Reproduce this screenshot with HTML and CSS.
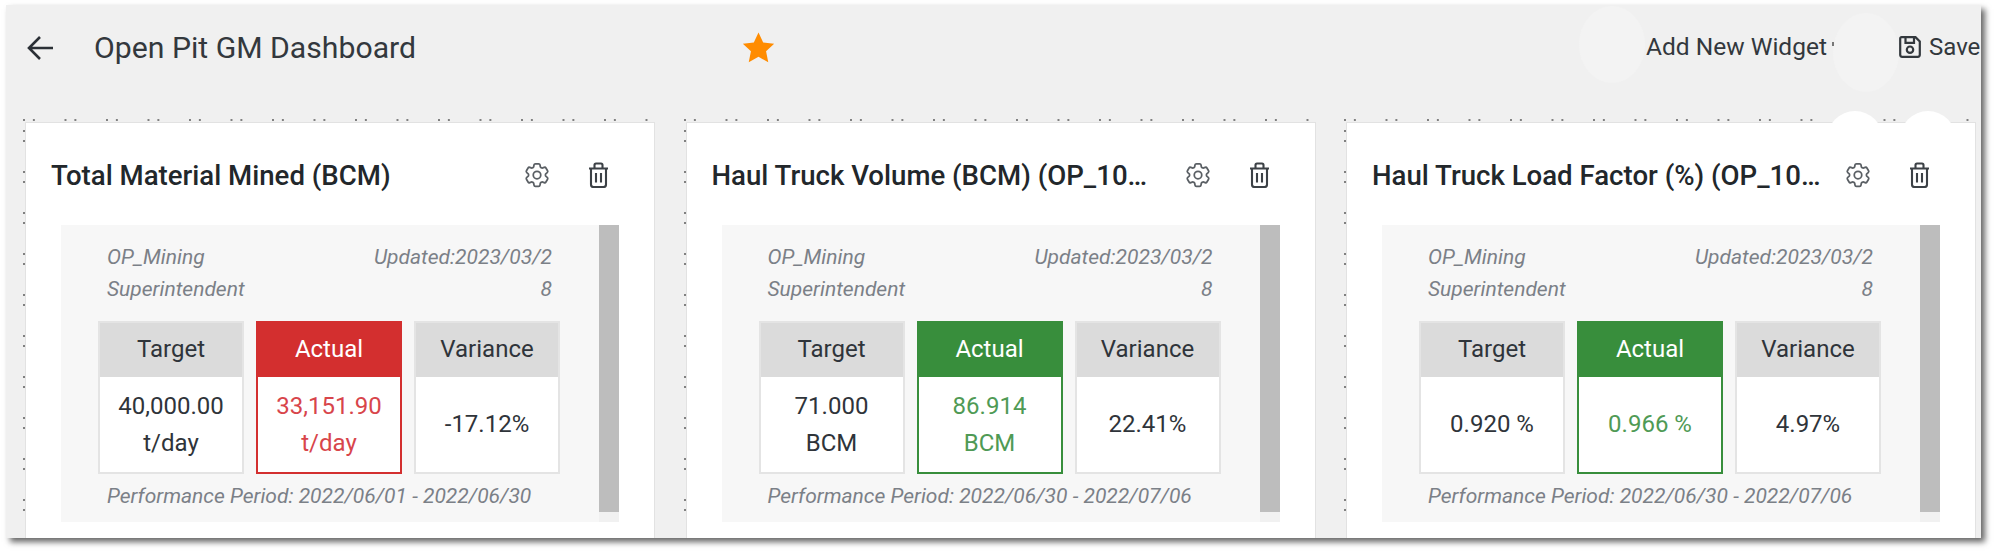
FILE: index.html
```html
<!DOCTYPE html>
<html lang="en">
<head>
    <meta charset="UTF-8">
    <title>Open Pit GM Dashboard</title>
    <link rel="stylesheet" href="styles.css">
</head>
<body>
    <svg class="sprites" width="0" height="0">
        <symbol id="gear" viewBox="0 0 24 24">
            <path d="M9.594 3.94c.09-.542.56-.94 1.11-.94h2.593c.55 0 1.02.398 1.11.94l.213 1.281c.063.374.313.686.645.87.074.04.147.083.22.127.324.196.72.257 1.075.124l1.217-.456a1.125 1.125 0 011.37.49l1.296 2.247a1.125 1.125 0 01-.26 1.431l-1.003.827c-.293.24-.438.613-.431.992a6.759 6.759 0 010 .255c-.007.378.138.75.43.99l1.005.828c.424.35.534.954.26 1.43l-1.298 2.247a1.125 1.125 0 01-1.369.491l-1.217-.456c-.355-.133-.75-.072-1.076.124a6.57 6.57 0 01-.22.128c-.331.183-.581.495-.644.869l-.213 1.28c-.09.543-.56.941-1.11.941h-2.594c-.55 0-1.02-.398-1.11-.94l-.213-1.281c-.062-.374-.312-.686-.644-.87a6.52 6.52 0 01-.22-.127c-.325-.196-.72-.257-1.076-.124l-1.217.456a1.125 1.125 0 01-1.369-.49l-1.297-2.247a1.125 1.125 0 01.26-1.431l1.004-.827c.292-.24.437-.613.43-.992a6.932 6.932 0 010-.255c.007-.378-.138-.75-.43-.99l-1.004-.828a1.125 1.125 0 01-.26-1.43l1.297-2.247a1.125 1.125 0 011.37-.491l1.216.456c.356.133.751.072 1.076-.124.072-.044.146-.087.22-.128.332-.183.582-.495.644-.869l.214-1.281z"/>
            <circle cx="12" cy="12" r="3"/>
        </symbol>
        <symbol id="trash" viewBox="0 0 21 26">
            <path d="M1 6.5h19M6.5 6V3a1.5 1.5 0 011.5-1.500h5A1.500 1.500 0 0114.500 3v3M3 6.500v16a2.500 2.500 0 002.500 2.500h10a2.500 2.500 0 002.500-2.500v-16M8 11v9.500M13 11v9.500"/>
        </symbol>
    </svg>

    <div class="frame">
        <div class="toolbar">
            <span class="halo halo-add"></span>
            <span class="halo halo-save"></span>
            <svg class="back" viewBox="0 0 28 26">
                <path d="M27 13H3M14 2L3 13l11 11"/>
            </svg>
            <h1>Open Pit GM Dashboard</h1>
            <svg class="star" viewBox="0 0 24 24">
                <path d="M12 1l3.4 7.400 8 .9-5.900 5.500 1.600 8L12 18.800l-7.100 4 1.600-8L.6 9.300l8-.9z"/>
            </svg>
            <span class="add-widget">Add New Widget</span>
            <span class="add-caret"></span>
            <svg class="save-icon" viewBox="0 0 22 22">
                <path d="M2.500 1.200h14l4.300 4.300v13.300a2 2 0 01-2 2H3.200a2 2 0 01-2-2V2.500a1.300 1.300 0 011.300-1.300zM6.500 1.200v5.600h8.500V1.200M11 10.500a3.200 3.200 0 100 6.400 3.200 3.200 0 000-6.400z"/>
            </svg>
            <span class="save">Save</span>
        </div>

        <div class="board">
            <div class="widget">
                <div class="card">
                    <div class="card-head">
                        <h2>Total Material Mined (BCM)</h2>
                        <svg class="gear"><use href="#gear"/></svg>
                        <svg class="trash"><use href="#trash"/></svg>
                    </div>
                    <div class="panel">
                        <div class="panel-body">
                            <div class="meta">
                                <span class="owner">OP_Mining Superintendent</span>
                                <span class="updated">Updated:2023/03/28</span>
                            </div>
                            <div class="kpis">
                                <div class="kpi">
                                    <div class="kpi-head">Target</div>
                                    <div class="kpi-value">40,000.00<br>t/day</div>
                                </div>
                                <div class="kpi bad">
                                    <div class="kpi-head">Actual</div>
                                    <div class="kpi-value">33,151.90<br>t/day</div>
                                </div>
                                <div class="kpi">
                                    <div class="kpi-head">Variance</div>
                                    <div class="kpi-value">-17.12%</div>
                                </div>
                            </div>
                            <div class="period">Performance Period: 2022/06/01 - 2022/06/30</div>
                        </div>
                        <div class="scrollbar"><div class="thumb"></div></div>
                    </div>
                </div>
            </div>

            <div class="widget">
                <div class="card">
                    <div class="card-head">
                        <h2>Haul Truck Volume (BCM) (OP_1001)</h2>
                        <svg class="gear"><use href="#gear"/></svg>
                        <svg class="trash"><use href="#trash"/></svg>
                    </div>
                    <div class="panel">
                        <div class="panel-body">
                            <div class="meta">
                                <span class="owner">OP_Mining Superintendent</span>
                                <span class="updated">Updated:2023/03/28</span>
                            </div>
                            <div class="kpis">
                                <div class="kpi">
                                    <div class="kpi-head">Target</div>
                                    <div class="kpi-value">71.000<br>BCM</div>
                                </div>
                                <div class="kpi good">
                                    <div class="kpi-head">Actual</div>
                                    <div class="kpi-value">86.914<br>BCM</div>
                                </div>
                                <div class="kpi">
                                    <div class="kpi-head">Variance</div>
                                    <div class="kpi-value">22.41%</div>
                                </div>
                            </div>
                            <div class="period">Performance Period: 2022/06/30 - 2022/07/06</div>
                        </div>
                        <div class="scrollbar"><div class="thumb"></div></div>
                    </div>
                </div>
            </div>

            <div class="widget">
                <div class="card">
                    <span class="bump bump-gear"></span>
                    <span class="bump bump-trash"></span>
                    <div class="card-head">
                        <h2>Haul Truck Load Factor (%) (OP_1001)</h2>
                        <svg class="gear"><use href="#gear"/></svg>
                        <svg class="trash"><use href="#trash"/></svg>
                    </div>
                    <div class="panel">
                        <div class="panel-body">
                            <div class="meta">
                                <span class="owner">OP_Mining Superintendent</span>
                                <span class="updated">Updated:2023/03/28</span>
                            </div>
                            <div class="kpis">
                                <div class="kpi">
                                    <div class="kpi-head">Target</div>
                                    <div class="kpi-value">0.920 %</div>
                                </div>
                                <div class="kpi good">
                                    <div class="kpi-head">Actual</div>
                                    <div class="kpi-value">0.966 %</div>
                                </div>
                                <div class="kpi">
                                    <div class="kpi-head">Variance</div>
                                    <div class="kpi-value">4.97%</div>
                                </div>
                            </div>
                            <div class="period">Performance Period: 2022/06/30 - 2022/07/06</div>
                        </div>
                        <div class="scrollbar"><div class="thumb"></div></div>
                    </div>
                </div>
            </div>
        </div>
    </div>
</body>
</html>
```

FILE: styles.css
```css
* {
    margin: 0;
    padding: 0;
    box-sizing: border-box;
    font-family: Roboto, "Liberation Sans", sans-serif;
}

html, body {
    height: 557px;
    overflow: hidden;
    background-color: #fff;
}

.sprites {
    position: absolute;
}

.frame {
    width: 1975px;
    height: 533px;
    margin: 5px 0 0 6px;
    padding-left: 17px;
    background-color: #f0f0f0;
    box-shadow: 4px 4px 6px rgba(0, 0, 0, 0.6);
    overflow: hidden;
}

/* header */
.toolbar {
    position: relative;
    display: flex;
    align-items: center;
    height: 85px;
    padding: 0 0 0 3px;
    color: #33383d;
}

.halo {
    position: absolute;
    border-radius: 50%;
    background-color: #f3f3f3;
}

.halo-add {
    left: 1556px;
    top: 1px;
    width: 66px;
    height: 77px;
}

.halo-save {
    left: 1810px;
    top: 8px;
    width: 66px;
    height: 79px;
}

.back {
    width: 28px;
    height: 26px;
    fill: none;
    stroke: #2b3036;
    stroke-width: 2.6;
}

h1 {
    width: 321px;
    margin-left: 40px;
    font-size: 30.2px;
    font-weight: 400;
    white-space: nowrap;
}

.star {
    width: 33px;
    height: 33px;
    margin-left: 327px;
    fill: #ff8c00;
}

.add-widget {
    position: relative;
    width: 180px;
    margin: 0 0 2px 871px;
    font-size: 24.5px;
    white-space: nowrap;
}

.add-caret {
    position: relative;
    width: 2px;
    height: 4px;
    margin: 0 0 8px 6px;
    background-color: #777;
}

.save-icon {
    position: relative;
    flex: none;
    width: 22px;
    height: 22px;
    margin: 0 0 2px 65px;
    fill: none;
    stroke: #33383d;
    stroke-width: 2.2;
}

.save {
    margin: 0 0 2px 8px;
    font-size: 24px;
}

/* widgets */
.board {
    display: grid;
    grid-template-columns: repeat(3, 632px);
    column-gap: 28.5px;
    margin-top: 29px;
}

.widget {
    height: 420px;
    padding: 3px 0 0 2px;
    background-image:
        linear-gradient(90deg, #808080 2px, transparent 2px, transparent 10px, #808080 10px, #808080 12px, transparent 12px),
        linear-gradient(180deg, #808080 2px, transparent 2px, transparent 10px, #808080 10px, #808080 12px, transparent 12px);
    background-size: 41.5px 2px, 2px 41px;
    background-position: 0 0, 0 11px;
    background-repeat: repeat-x, repeat-y;
}

.card {
    position: relative;
    height: 100%;
    background-color: #fff;
    border: 1px solid #e2e2e2;
    border-bottom: none;
}

.bump {
    position: absolute;
    top: -12px;
    width: 56px;
    height: 56px;
    border-radius: 50%;
    background-color: #fff;
}

.bump-gear {
    left: 480px;
}

.bump-trash {
    left: 553px;
}

.card-head {
    position: relative;
    display: flex;
    align-items: center;
    height: 102px;
    padding: 2px 0 0 25px;
    color: #22272b;
}

h2 {
    width: 450px;
    font-size: 27.6px;
    font-weight: 500;
    white-space: nowrap;
    overflow: hidden;
    text-overflow: ellipsis;
}

.gear {
    flex: none;
    width: 30px;
    height: 30px;
    margin-left: 21px;
    fill: none;
    stroke: #5a5f64;
    stroke-width: 1.4;
}

.trash {
    flex: none;
    width: 21px;
    height: 26px;
    margin-left: 36px;
    fill: none;
    stroke: #3c4146;
    stroke-width: 2.1;
}

.panel {
    display: flex;
    width: 558px;
    height: 297px;
    margin-left: 35px;
    background-color: #f7f7f7;
}

.panel-body {
    flex: 1;
    padding: 16px 47px 0 46px;
    min-width: 0;
}

.scrollbar {
    width: 20px;
    background-color: #f1f1f1;
}

.thumb {
    height: 287px;
    background-color: #bdbdbd;
}

.meta {
    display: flex;
    justify-content: space-between;
    height: 64px;
    font-size: 21px;
    font-style: italic;
    line-height: 32px;
    color: #7b8087;
}

.owner {
    width: 170px;
}

.updated {
    width: 185px;
    text-align: right;
    word-break: break-all;
}

.kpis {
    display: grid;
    grid-template-columns: repeat(3, 146px);
    column-gap: 12px;
    margin: 16px 0 0 -9px;
}

.kpi {
    display: flex;
    flex-direction: column;
    height: 153px;
    border: 2px solid #e4e4e4;
    background-color: #fff;
    color: #2f343a;
}

.kpi-head {
    height: 54px;
    font-size: 24px;
    line-height: 52px;
    text-align: center;
    background-color: #dbdbdb;
}

.kpi-value {
    flex: 1;
    display: flex;
    flex-direction: column;
    justify-content: center;
    font-size: 24px;
    line-height: 37px;
    text-align: center;
}

.bad {
    border-color: #d32f2f;
    color: #d8454b;
}

.good {
    border-color: #388e3c;
    color: #4f9a55;
}

.bad .kpi-head {
    background-color: #d32f2f;
    color: #fff;
}

.good .kpi-head {
    background-color: #388e3c;
    color: #fff;
}

.period {
    margin-top: 10px;
    font-size: 21px;
    font-style: italic;
    white-space: nowrap;
    color: #7b8087;
}
```
